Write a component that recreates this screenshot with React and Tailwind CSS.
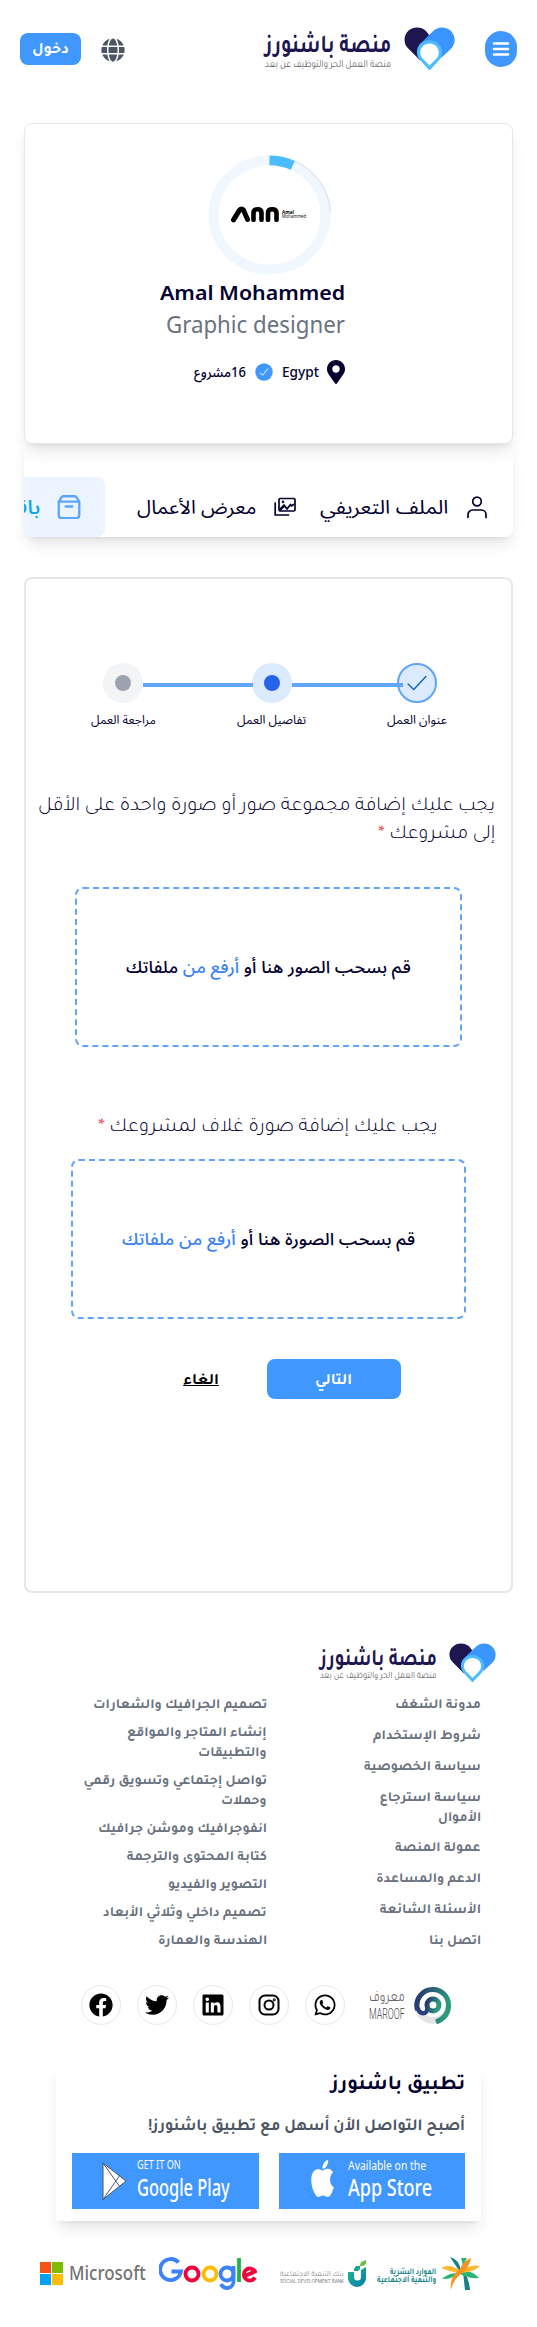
import React, { useLayoutEffect, useRef, useState } from "react";
import { FaGlobe, FaMapMarkerAlt, FaFacebook, FaTwitter, FaLinkedin, FaWhatsapp } from "react-icons/fa";

const TAJ = "font-[Tajawal,'DejaVu_Sans',sans-serif]";
const NSA = "font-['Noto_Sans','Noto_Sans_Arabic','DejaVu_Sans',sans-serif]";
const OPEN = "font-['Noto_Sans','Open_Sans',sans-serif]";

/* One line of text that fills exactly the width of its box. */
function Fit({ className = "", ltr = false, children }) {
  const box = useRef(null);
  const text = useRef(null);
  const [scale, setScale] = useState(1);
  useLayoutEffect(() => {
    setScale(box.current.clientWidth / text.current.offsetWidth);
  }, []);
  return (
    <span ref={box} dir={ltr ? "ltr" : "rtl"} className={`block shrink-0 whitespace-nowrap ${className}`}>
      <span
        ref={text}
        className={`inline-block ${ltr ? "origin-left" : "origin-right"}`}
        style={{ transform: `scaleX(${scale})` }}
      >
        {children}
      </span>
    </span>
  );
}

function Heart({ className }) {
  return (
    <svg viewBox="0 0 51 45" className={className} preserveAspectRatio="none">
      <path d="M13 0.5C6 0.5 0.5 6 0.5 13c0 3.600 1.400 6.700 3.800 9L16 34l12-22-6-8C19.500 1.700 16.500 0.500 13 0.500Z" fill="#1e1650" />
      <path d="M38 0.500c-3.500 0-6.500 1.400-8.800 3.600L15.500 18 13 27l12 4 13 0 9-8.800c2.200-2.300 3.600-5.300 3.600-8.900C50.600 6 45 0.500 38 0.500Z" fill="#3b95ff" />
      <path d="M25.500 13.500c-7 0-12.600 5.400-12.600 12.200 0 3.300 1.200 6 3.400 8.300L25.500 44.500 35 34c2-2.200 3.200-5 3.200-8.300 0-6.800-5.600-12.200-12.700-12.200Z" fill="#4bbcff" />
      <path d="M25.500 16.800c-5.200 0-9.300 4-9.300 9.200 0 2.300.9 4.500 2.400 6.200L25.500 39.500l7-7.300c1.500-1.700 2.300-3.900 2.300-6.200 0-5.200-4.100-9.200-9.300-9.200Z" fill="#fff" />
    </svg>
  );
}

function Step({ label, width, children }) {
  return (
    <div className="flex w-10 flex-col items-center">
      {children}
      <Fit className={`${NSA} ${width} mt-[7px] text-xs leading-5`}>{label}</Fit>
    </div>
  );
}

const pages = [
  [["مدونة الشغف", "w-[86px]"]],
  [["شروط الإستخدام", "w-[108px]"]],
  [["سياسة الخصوصية", "w-[117px]"]],
  [["سياسة استرجاع", "w-[101px]"], ["الأموال", "w-[43px]"]],
  [["عمولة المنصة", "w-[86px]"]],
  [["الدعم والمساعدة", "w-[105px]"]],
  [["الأسئلة الشائعة", "w-[101px]"]],
  [["اتصل بنا", "w-[52px]"]],
];

const services = [
  [["تصميم الجرافيك والشعارات", "w-[174px]"]],
  [["إنشاء المتاجر والمواقع", "w-[140px]"], ["والتطبيقات", "w-[69px]"]],
  [["تواصل إجتماعي وتسويق رقمي", "w-[183px]"], ["وحملات", "w-[46px]"]],
  [["انفوجرافيك وموشن جرافيك", "w-[169px]"]],
  [["كتابة المحتوى والترجمة", "w-[140px]"]],
  [["التصوير والفيديو", "w-[99px]"]],
  [["تصميم داخلي وثلاثي الأبعاد", "w-[164px]"]],
  [["الهندسة والعمارة", "w-[109px]"]],
];

function Links({ items, className }) {
  return (
    <ul className={`flex h-64 flex-col justify-between ${className}`}>
      {items.map((lines) => (
        <li key={lines[0][0]}>
          {lines.map(([text, width]) => (
            <Fit key={text} className={`${TAJ} ${width} text-[14px] leading-5 font-bold text-[#6b7280]`}>
              {text}
            </Fit>
          ))}
        </li>
      ))}
    </ul>
  );
}

function Round({ children }) {
  return (
    <a className="flex h-10 w-10 items-center justify-center rounded-full border border-gray-200 text-black">
      {children}
    </a>
  );
}

export default function App() {
  return (
    <div dir="rtl" className={`h-[2327px] w-[537px] overflow-hidden bg-white text-[#03002e] ${TAJ}`}>
      <header className="flex h-[123px] items-start pt-[27px] pr-5 pl-5">
        <button className="mt-1 flex h-9 w-8 items-center justify-center rounded-full bg-[#3f97ff]">
          <svg viewBox="0 0 18 16" className="h-4 w-[18px]" stroke="#fff" strokeWidth="2.600" strokeLinecap="round">
            <path d="M2 2.500h14M2 8h14M2 13.500h14" />
          </svg>
        </button>
        <div className="mr-[30px] flex">
          <Heart className="h-11 w-[51px]" />
          <div className="mr-[13px] flex flex-col">
            <Fit className="mt-2 w-[126px] text-[26px] leading-[26px] font-bold text-[#1e1650]">منصة باشنورز</Fit>
            <Fit className="mt-[-2px] w-[126px] text-[11px] leading-[14px] text-[#666]">منصة العمل الحر والتوظيف عن بعد</Fit>
          </div>
        </div>
        <FaGlobe className="mt-[11px] mr-auto h-6 w-6 text-[#4b5563]" />
        <button className="mt-[6px] mr-5 flex h-8 w-[61px] items-center justify-center rounded-lg bg-[#3f97ff] pt-1 text-white">
          <Fit className="w-[37px] text-base leading-6 font-bold">دخول</Fit>
        </button>
      </header>

      <section className="relative mx-6 flex h-[321px] flex-col items-start rounded-lg border border-gray-200 bg-white pr-[167px] shadow-lg">
        <div className="mt-[31px] mr-[14px] flex h-[120px] w-[123px]">
          <svg viewBox="0 0 123 123" preserveAspectRatio="none" className="h-[120px] w-[123px]">
            <circle cx="61.500" cy="61.500" r="56" fill="none" stroke="#f0f7ff" strokeWidth="10" />
            <path d="M61.500 5.500A56 56 0 0 1 84.800 10.600" fill="none" stroke="#4bbcff" strokeWidth="10" />
            <path d="M86 6A61 61 0 0 1 122.500 58" fill="none" stroke="#cfd0ea" strokeWidth=".8" />
            <g transform="translate(0 -3)" strokeLinecap="round" strokeLinejoin="round">
              <path d="M25.500 69.500L31.500 59.500Q33.500 57 35.500 59.500L39.500 69" fill="none" stroke="#000" strokeWidth="5" />
              <path d="M45.500 69.500V62.500Q45.500 58.700 49.500 58.700T53.500 62.500V69.500" fill="none" stroke="#000" strokeWidth="4.600" />
              <path d="M60 69.500V62.500Q60 58.700 64.200 58.700T68.500 62.500V69.500" fill="none" stroke="#000" strokeWidth="4.600" />
              <text x="74" y="63" fontSize="4.600" fontWeight="700" fontFamily="Open Sans" textLength="12" lengthAdjust="spacingAndGlyphs" direction="ltr">Amal</text>
              <text x="74" y="68" fontSize="4.600" fontFamily="Open Sans" textLength="24" lengthAdjust="spacingAndGlyphs" direction="ltr">Mohammed</text>
            </g>
          </svg>
        </div>
        <Fit ltr className={`${OPEN} mt-1 w-[185px] text-xl leading-7 font-semibold`}>Amal Mohammed</Fit>
        <Fit ltr className={`${OPEN} mt-[1px] w-[179px] text-[23px] leading-8 text-[#6b7280]`}>Graphic designer</Fit>
        <div className="mt-[20px] flex h-6 items-center">
          <FaMapMarkerAlt className="h-6 w-[18px]" />
          <Fit ltr className={`${OPEN} mr-2 w-[37px] text-[14px] leading-5 font-medium`}>Egypt</Fit>
          <svg viewBox="0 0 18 18" className="mr-[9px] h-[18px] w-[18px]">
            <circle cx="9" cy="9" r="8.700" fill="#3f97ff" />
            <path d="M5 9.500l2.700 2.700L13 5.500" fill="none" stroke="#fff" strokeWidth="1" />
          </svg>
          <Fit className={`${NSA} mr-[9px] w-[52px] text-[14px] leading-5 font-medium`}>16مشروع</Fit>
        </div>
      </section>

      <nav className="mx-6 flex h-[93px] items-end overflow-hidden rounded-b-lg shadow-lg">
        <div className="flex h-[60px] items-center pr-[26px]">
          <svg viewBox="0 0 20 23" className="h-[23px] w-5" fill="none" stroke="#03002e" strokeWidth="1.700" strokeLinecap="round">
            <circle cx="10" cy="5.500" r="4.300" />
            <path d="M1 21.500V18.500a4.500 4.500 0 0 1 4.500-4.500h9a4.500 4.500 0 0 1 4.500 4.500v3" />
          </svg>
          <Fit className={`${NSA} mr-[19px] w-[128px] text-[19px] leading-8`}>الملف التعريفي</Fit>
        </div>
        <div className="flex h-[60px] items-center pr-[24px]">
          <svg viewBox="0 0 22 20" className="h-5 w-[22px]" fill="none" stroke="#03002e" strokeWidth="1.700" strokeLinecap="round" strokeLinejoin="round">
            <rect x="5" y="1.500" width="16" height="12.500" rx="1.200" />
            <path d="M1.200 6v12H14.500M6 12l4-4 3 4 3.500-4.500 1 1.500 2-1.500M6 13.500l4-4" />
            <circle cx="9" cy="4.800" r=".5" />
          </svg>
          <Fit className={`${NSA} mr-[18px] w-[119px] text-[19px] leading-8`}>معرض الأعمال</Fit>
        </div>
        <div className="mr-8 flex h-[60px] w-[180px] shrink-0 items-center rounded-lg bg-[#ecf5ff] pr-6">
          <svg viewBox="0 0 24 25" className="h-6 w-6 shrink-0" fill="none" stroke="#5aa5ff" strokeWidth="2.400" strokeLinecap="round" strokeLinejoin="round">
            <path d="M1.300 7v14a3 3 0 0 0 3 3h15.400a3 3 0 0 0 3-3V7L19.700 2.300A2 2 0 0 0 18 1.300H6a2 2 0 0 0-1.700 1ZM1.300 7h21.400M8.500 12h7" />
          </svg>
          <Fit className={`${NSA} mr-[17px] w-[54px] text-[20px] leading-8 font-medium text-[#0ea5e9]`}>باقاتي</Fit>
        </div>
      </nav>

      <main className="mx-6 mt-10 flex h-[1016px] flex-col items-start rounded-lg border-2 border-gray-200">
        <div className="mt-[84px] mr-[74px] flex w-[334px] shrink-0">
          <Step label="عنوان العمل" width="w-[60px]">
            <div className="flex h-10 w-10 items-center justify-center rounded-full border-2 border-[#60a5fa] bg-[#dbeafe]">
              <svg viewBox="0 0 22 17" className="h-4 w-[22px]" fill="none" stroke="#0f68b5" strokeWidth="1.500" strokeLinecap="round" strokeLinejoin="round">
                <path d="M1.500 9.500l6 6L20.500 1.500" />
              </svg>
            </div>
          </Step>
          <div className="z-10 mt-[20px] mr-[-6px] h-1 flex-1 bg-[#60a5fa]" />
          <Step label="تفاصيل العمل" width="w-[69px]">
            <div className="flex h-10 w-10 items-center justify-center rounded-full bg-[#dbeafe]">
              <div className="h-4 w-4 rounded-full bg-[#2563eb]" />
            </div>
          </Step>
          <div className="mt-[20px] mr-[-1px] h-1 w-[110px] bg-[#60a5fa]" />
          <Step label="مراجعة العمل" width="w-[65px]">
            <div className="flex h-10 w-10 items-center justify-center rounded-full bg-[#f3f4f6]">
              <div className="h-4 w-4 rounded-full bg-[#9ca3af]" />
            </div>
          </Step>
        </div>

        <div className="mt-[63px] mr-4 text-[20px] leading-7 font-light">
          <Fit className="w-[457px]">يجب عليك إضافة مجموعة صور أو صورة واحدة على الأقل</Fit>
          <Fit className="w-[117px]">إلى مشروعك <span className="text-red-500">*</span></Fit>
        </div>
        <div className="mt-[38px] mr-[49px] flex h-40 w-[387px] shrink-0 items-center justify-center rounded-lg border-2 border-dashed border-[#60a5fa]">
          <Fit className={`${NSA} w-[285px] text-[17px] leading-7 font-medium`}>
            قم بسحب الصور هنا أو <span className="text-[#3b82f6]">أرفع من</span> ملفاتك
          </Fit>
        </div>
        <Fit className="mt-[67px] mr-[73px] w-[340px] text-[20px] leading-7 font-light">
          يجب عليك إضافة صورة غلاف لمشروعك <span className="text-red-500">*</span>
        </Fit>
        <div className="mt-[17px] mr-[45px] flex h-40 w-[395px] shrink-0 items-center justify-center rounded-lg border-2 border-dashed border-[#60a5fa]">
          <Fit className={`${NSA} w-[293px] text-[17px] leading-7 font-medium`}>
            قم بسحب الصورة هنا أو <span className="text-[#3b82f6]">أرفع من ملفاتك</span>
          </Fit>
        </div>
        <div className="mt-10 mr-[110px] flex items-center">
          <button className="flex h-10 w-[134px] items-center justify-center rounded-lg bg-[#3f97ff] pt-1.5 text-white">
            <Fit className="w-[37px] text-base leading-6 font-bold">التالي</Fit>
          </button>
          <Fit className="mt-1.5 mr-[48px] w-[36px] text-base leading-6 font-bold text-black">
            <span className="underline">الغاء</span>
          </Fit>
        </div>
      </main>

      <footer className="flex flex-col">
        <div className="mt-[50px] mr-[41px] flex">
          <Heart className="h-10 w-[47px]" />
          <div className="mr-3 flex flex-col">
            <Fit className="mt-2 w-[117px] text-[24px] leading-[23px] font-bold text-[#1e1650]">منصة باشنورز</Fit>
            <Fit className="mt-[-3px] w-[117px] text-[10px] leading-[12px] text-[#666]">منصة العمل الحر والتوظيف عن بعد</Fit>
          </div>
        </div>
        <div className="mt-[13px] mr-[56px] flex">
          <Links items={pages} className="w-[214px]" />
          <Links items={services} className="w-[190px]" />
        </div>

        <div className="mt-[33px] mr-[85px] flex h-10 items-center">
          <svg viewBox="0 0 38 39" className="h-[39px] w-[38px]" fill="none">
            <defs>
              <linearGradient id="maroof" x1="0" x2="1" y1="0" y2="0.300">
                <stop offset="0" stopColor="#27336d" />
                <stop offset="1" stopColor="#2a9a7c" />
              </linearGradient>
            </defs>
            <circle cx="19" cy="19.500" r="18.500" fill="#e4e5e7" />
            <circle cx="19" cy="18" r="13" fill="#fff" />
            <path d="M3.500 24A16 16 0 0 1 19 3.500 15.500 15.500 0 0 1 34.500 19C34.500 27 30 33 22 36" stroke="url(#maroof)" strokeWidth="5" />
            <path d="M3.500 22Q6 28.500 11 27Q14 25.500 13 20" stroke="#29407a" strokeWidth="4.400" />
            <circle cx="19" cy="19" r="6" stroke="url(#maroof)" strokeWidth="5" />
          </svg>
          <div className="mr-[9px] flex flex-col">
            <Fit className="w-[36px] text-[15px] leading-[17px] text-[#666]">معروف</Fit>
            <Fit ltr className="w-[36px] font-['Roboto',sans-serif] text-[14px] leading-[14px] font-light text-[#444]">MAROOF</Fit>
          </div>
          <div className="mr-6 flex gap-4">
            <Round><FaWhatsapp size={24} /></Round>
            <Round>
              <svg viewBox="0 0 24 24" className="h-6 w-6" fill="none" stroke="currentColor" strokeWidth="2">
                <rect x="2.500" y="2.500" width="19" height="19" rx="5.500" />
                <circle cx="12" cy="12" r="4.500" />
                <circle cx="17.300" cy="6.700" r=".5" />
              </svg>
            </Round>
            <Round><FaLinkedin size={24} /></Round>
            <Round><FaTwitter size={24} /></Round>
            <Round><FaFacebook size={24} /></Round>
          </div>
        </div>

        <div className="mx-14 mt-[39px] flex h-[157px] flex-col items-start px-4 shadow-lg">
          <Fit className="mt-2 w-[134px] text-[21px] leading-7 font-bold">تطبيق باشنورز</Fit>
          <Fit className="mt-4 w-[317px] text-[17px] leading-6 font-bold text-[#4b5563]">أصبح التواصل الأن أسهل مع تطبيق باشنورز!</Fit>
          <div dir="ltr" className="mt-[13px] flex w-full justify-between text-white">
            <a className="flex h-14 w-[187px] bg-[#3f97ff] pl-[30px]">
              <svg viewBox="0 0 25 38" className="mt-[9px] h-[38px] w-[25px]" fill="#fff" stroke="#4b5563" strokeWidth="1">
                <path d="M1 1L24 19 1 37.500ZM1 1L18 25M1 37.500L18 13" strokeLinejoin="round" />
              </svg>
              <div className={`${OPEN} mt-[3px] ml-[10px] flex flex-col`}>
                <Fit ltr className="w-[44px] text-[12px] leading-[18px]">GET IT ON</Fit>
                <Fit ltr className="w-[93px] text-[24px] leading-[25px] font-medium">Google Play</Fit>
              </div>
            </a>
            <a className="flex h-14 w-[186px] bg-[#3f97ff] pl-[32px]">
              <svg viewBox="0 32 384 448" preserveAspectRatio="none" className="mt-[7px] h-[37px] w-[23px]" fill="#fff">
                <path d="M318.700 268.700c-.2-36.700 16.400-64.400 50-84.800-18.800-26.900-47.200-41.700-84.700-44.600-35.500-2.800-74.300 20.700-88.500 20.700-15 0-49.400-19.700-76.400-19.700C63.300 141.200 4 184.800 4 273.500q0 39.300 14.400 81.200c12.800 36.700 59 126.700 107.200 125.200 25.200-.6 43-17.900 75.800-17.900 31.800 0 48.300 17.900 76.400 17.900 48.600-.7 90.400-82.500 102.600-119.300-65.200-30.700-61.700-90-61.700-91.900zm-56.600-164.200c27.300-32.400 24.800-61.900 24-72.500-24.100 1.400-52 16.400-67.900 34.900-17.500 19.800-27.800 44.300-25.600 71.900 26.100 2 49.900-11.400 69.500-34.300z" />
              </svg>
              <div className={`${OPEN} mt-1 ml-[14px] flex flex-col`}>
                <Fit ltr className="w-[78px] text-[12px] leading-[18px]">Available on the</Fit>
                <Fit ltr className="mt-[-1px] w-[84px] text-[24px] leading-[25px] font-medium">App Store</Fit>
              </div>
            </a>
          </div>
        </div>

        <div dir="ltr" className="mt-[35px] ml-[40px] flex h-[35px] items-center">
          <div className="grid grid-cols-2 gap-[1px]">
            <i className="h-[11px] w-[11px] bg-[#f65314]" />
            <i className="h-[11px] w-[11px] bg-[#7cbb00]" />
            <i className="h-[11px] w-[11px] bg-[#00a1f1]" />
            <i className="h-[11px] w-[11px] bg-[#ffbb00]" />
          </div>
          <Fit ltr className={`${OPEN} mb-[2px] ml-[6px] w-[77px] text-[20px] leading-7 font-medium text-[#737373]`}>Microsoft</Fit>
          <svg viewBox="0 0 98 34" className="ml-[13px] h-[34px] w-[98px]" fill="none" strokeWidth="3.800">
            <path d="M19.500 5.500A10.500 10.500 0 1 0 22 14.500H12.500" stroke="#3b82fb" />
            <circle cx="33" cy="17" r="6.500" stroke="#f2003c" />
            <circle cx="51" cy="17" r="6.500" stroke="#fbbc05" />
            <circle cx="68" cy="17" r="6.500" stroke="#3b82fb" />
            <path d="M74.500 9V24.500A6.500 6.500 0 0 1 62 27" stroke="#3b82fb" />
            <path d="M80 1V25" stroke="#1fb544" />
            <path d="M84.500 19.500L96 14.500A6 6 0 1 0 96 20.500" stroke="#f2003c" />
          </svg>
          <div className="mt-[9px] ml-[23px] flex flex-col">
            <Fit className="w-[64px] text-[8px] leading-[8px] text-[#888]">بنك التنمية الاجتماعية</Fit>
            <Fit ltr className="w-[64px] font-['Inter',sans-serif] text-[4.500px] leading-[6px] text-[#777]">SOCIAL DEVELOPMENT BANK</Fit>
          </div>
          <svg viewBox="0 0 18 28" className="ml-[4px] h-7 w-[18px]">
            <defs>
              <linearGradient id="sdb" x1="0" x2="1" y1="0" y2="1">
                <stop offset="0" stopColor="#20b98f" />
                <stop offset="1" stopColor="#0578ad" />
              </linearGradient>
            </defs>
            <path d="M0 12H6V17a3.500 3.500 0 0 0 7 0V10L18 7V18A9 9 0 0 1 0 18Z" fill="url(#sdb)" />
            <path d="M12 5l1-3L18 0V4L15 6H12Z" fill="#6abf4b" />
            <path d="M6 9l2-3h4v3l-2 2H6Z" fill="#16a394" />
          </svg>
          <div className="mt-[7px] ml-[11px] flex flex-col">
            <Fit className="ml-auto w-[46px] text-[9px] leading-[8px] font-bold text-[#178488]">الموارد البشرية</Fit>
            <Fit className="w-[59px] text-[9px] leading-[8px] font-bold text-[#178488]">والتنمية الاجتماعية</Fit>
          </div>
          <svg viewBox="0 0 39 33" className="ml-[5px] h-[33px] w-[39px]">
            <path d="M19 15L9 0Q18 2 20 14ZM22 15L24 33H29Q28 21 22 13Z" fill="#168085" />
            <path d="M19 16Q8 15 1 22Q10 23 20 15ZM20 15Q30 12 38 21Q28 22 19 17Z" fill="#2ab573" />
            <path d="M20 14Q8 6 0 11Q9 15 18 16ZM21 14Q30 7 39 9Q33 15 20 16Z" fill="#fbb831" />
            <path d="M19 12Q22 4 30 1Q28 12 20 17 12 23 10 33Q8 20 19 12Z" fill="#f7931e" />
            <path d="M20 1L26 1 22 8Z" fill="#2ab573" />
          </svg>
        </div>
      </footer>
    </div>
  );
}
